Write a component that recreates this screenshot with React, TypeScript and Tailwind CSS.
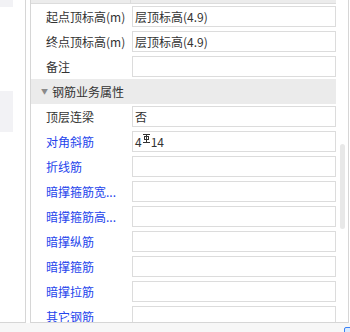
import React from "react";

const FONT = { fontFamily: '"Noto Sans CJK SC", "Liberation Sans", sans-serif' };

interface Row {
  label: string;
  value?: React.ReactNode;
  blue?: boolean;
}

const topRows: Row[] = [
  { label: "起点顶标高(m)", value: "层顶标高(4.9)" },
  { label: "终点顶标高(m)", value: "层顶标高(4.9)" },
  { label: "备注" },
];

function RebarMark() {
  return (
    <svg width="7" height="9" viewBox="0 0 7 9" className="mx-[1px] -translate-y-[3px]">
      <g stroke="#333" strokeWidth="1" fill="none">
        <line x1="0" y1="0.5" x2="7" y2="0.5" />
        <rect x="1.5" y="2.5" width="4" height="3" />
        <line x1="3.5" y1="0.5" x2="3.5" y2="8.5" />
        <line x1="0" y1="8.5" x2="7" y2="8.5" />
      </g>
    </svg>
  );
}

const rebarRows: Row[] = [
  { label: "顶层连梁", value: "否" },
  {
    label: "对角斜筋",
    blue: true,
    value: (
      <span className="flex items-center">
        4<RebarMark />14
      </span>
    ),
  },
  { label: "折线筋", blue: true },
  { label: "暗撑箍筋宽...", blue: true },
  { label: "暗撑箍筋高...", blue: true },
  { label: "暗撑纵筋", blue: true },
  { label: "暗撑箍筋", blue: true },
  { label: "暗撑拉筋", blue: true },
  { label: "其它钢筋", blue: true },
];

function PropRow({ row }: { row: Row }) {
  return (
    <div className="h-[25px] shrink-0 flex">
      <div
        className={`w-[101px] pl-[15px] flex items-center text-[12px] whitespace-nowrap ${
          row.blue ? "text-[#2444ec]" : "text-[#333]"
        }`}
      >
        {row.label}
      </div>
      <div className="w-[204px] h-[21px] mt-[2px] border border-[#dcdcdc] bg-white pl-[2px] flex items-center text-[12px] text-[#333]">
        {row.value}
      </div>
    </div>
  );
}

export default function App() {
  return (
    <div className="w-[350px] h-[332px] bg-[#f7f7f7] overflow-hidden relative" style={FONT}>
      <div className="h-[323px] flex bg-white">
        {/* left tree panel */}
        <div className="w-[26px] h-full border-r border-b border-[#d6d6d6] flex flex-col">
          <div className="w-[13px] h-[7px] bg-[#f2f2f5]" />
          <div className="w-[13px] h-[41px] mt-[84px] bg-[#f2f2f5]" />
        </div>

        <div className="w-[4px]" />

        {/* property grid */}
        <div className="w-[319px] h-full border-l border-r border-b border-[#d6d6d6] flex">
          <div className="w-[305px] flex flex-col overflow-hidden">
            <div className="h-[4px] shrink-0 bg-[#ececec] border-b border-[#dcdcdc] flex">
              <div className="w-[100px] border-r border-[#dcdcdc]" />
            </div>
            {topRows.map((r) => (
              <PropRow key={r.label} row={r} />
            ))}
            <div className="h-[25px] shrink-0 bg-[#ebebeb] flex items-center text-[12px] text-[#333]">
              <span className="ml-[10px] w-[11px] text-[7px] text-[#8a8a8a]">▼</span>
              <span>钢筋业务属性</span>
            </div>
            {rebarRows.map((r) => (
              <PropRow key={r.label} row={r} />
            ))}
          </div>
          {/* scrollbar */}
          <div className="w-[12px] relative">
            <div className="absolute left-[4px] top-[144px] w-[5px] h-[85px] rounded-full bg-[#e8e8e8]" />
          </div>
        </div>
      </div>
      <div className="absolute left-[344px] top-[327px] w-[10px] h-[10px] rounded-[2px] border border-[#3b82f6] bg-[#dbeafe]" />
    </div>
  );
}
